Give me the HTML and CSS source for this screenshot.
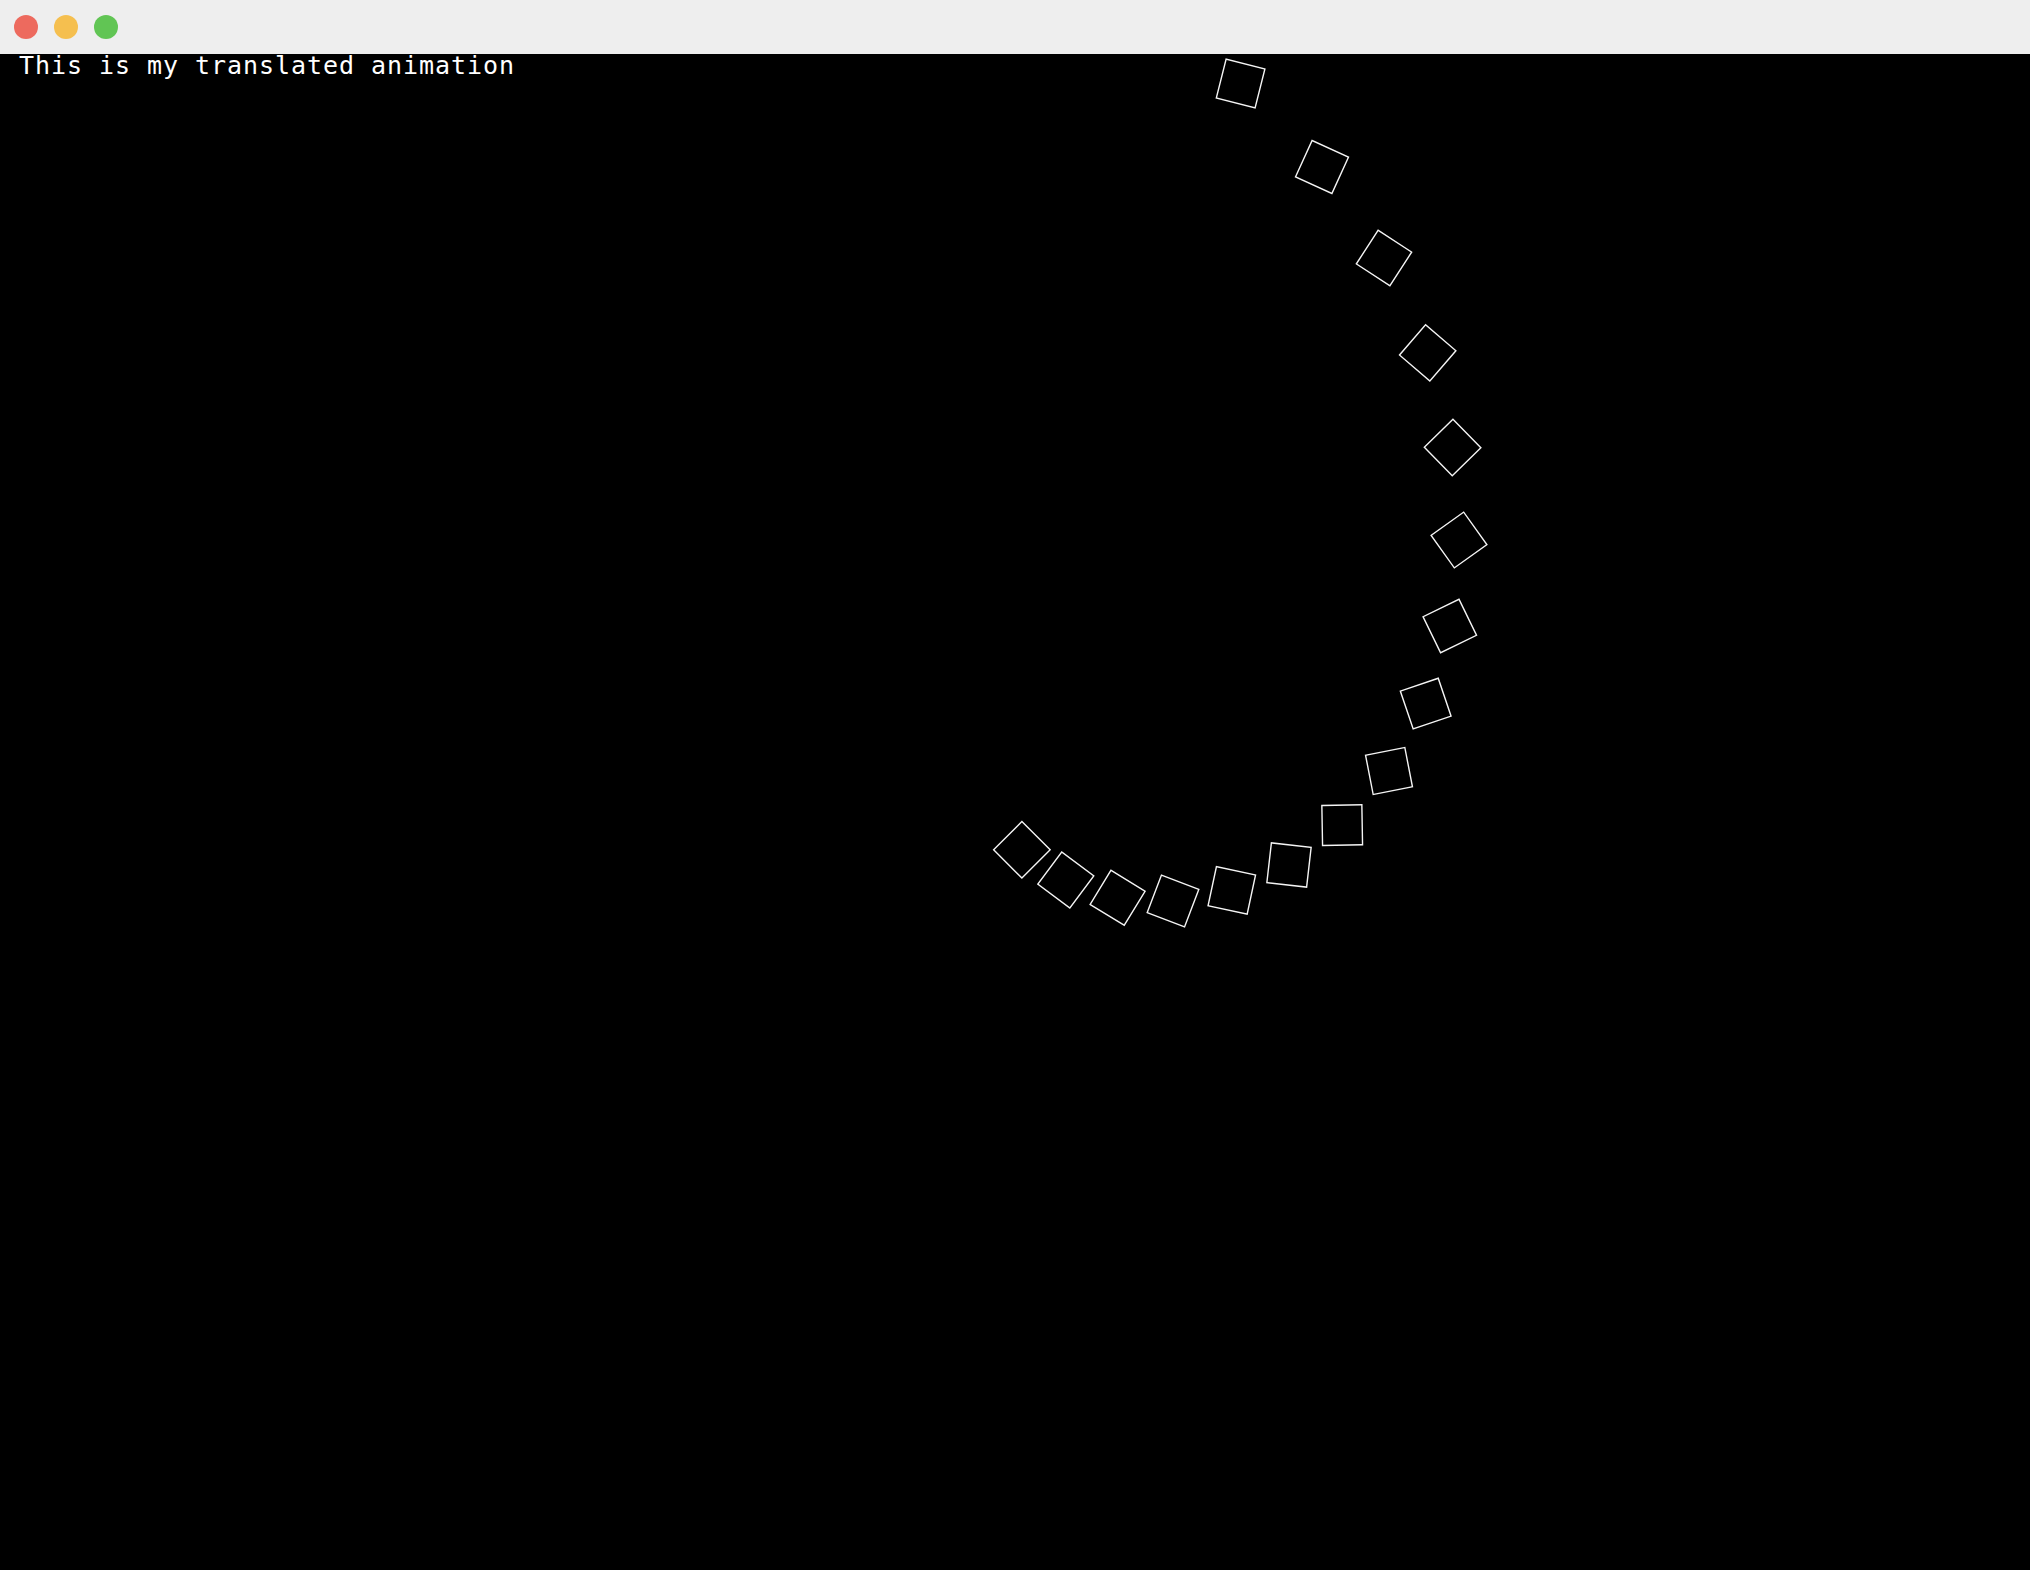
FILE: index.html
```html
<!DOCTYPE html>
<html>
<head>
<meta charset="utf-8">
<title>Animation</title>
<link rel="stylesheet" href="styles.css">
</head>
<body>
<div class="window">
  <div class="titlebar">
    <span class="light red"></span>
    <span class="light yellow"></span>
    <span class="light green"></span>
  </div>
  <div class="canvas">
    <div class="caption">This is my translated animation</div>
    <svg class="shapes" viewBox="0 54 2030 1516" width="2030" height="1516" xmlns="http://www.w3.org/2000/svg">
      <g fill="none" stroke="#f4f4f4" stroke-width="1.4">
        <rect x="-20" y="-20" width="40" height="40" transform="translate(1240.6 83.5) rotate(14.2)"/>
        <rect x="-20" y="-20" width="40" height="40" transform="translate(1322 167) rotate(24.5)"/>
        <rect x="-20" y="-20" width="40" height="40" transform="translate(1384 258) rotate(33)"/>
        <rect x="-20" y="-20" width="40" height="40" transform="translate(1427.7 352.9) rotate(40.7)"/>
        <rect x="-20" y="-20" width="40" height="40" transform="translate(1452.6 447.5) rotate(45.7)"/>
        <rect x="-20" y="-20" width="40" height="40" transform="translate(1459 540) rotate(54.5)"/>
        <rect x="-20" y="-20" width="40" height="40" transform="translate(1449.8 626) rotate(64)"/>
        <rect x="-20" y="-20" width="40" height="40" transform="translate(1425.7 703.6) rotate(71.3)"/>
        <rect x="-20" y="-20" width="40" height="40" transform="translate(1389 771) rotate(79)"/>
        <rect x="-20" y="-20" width="40" height="40" transform="translate(1342.2 825.1) rotate(89)"/>
        <rect x="-20" y="-20" width="40" height="40" transform="translate(1289 865) rotate(96.5)"/>
        <rect x="-20" y="-20" width="40" height="40" transform="translate(1231.8 890.4) rotate(102.1)"/>
        <rect x="-20" y="-20" width="40" height="40" transform="translate(1173 901) rotate(110.9)"/>
        <rect x="-20" y="-20" width="40" height="40" transform="translate(1117.6 897.8) rotate(121.4)"/>
        <rect x="-20" y="-20" width="40" height="40" transform="translate(1065.8 880) rotate(126.8)"/>
        <rect x="-20" y="-20" width="40" height="40" transform="translate(1021.9 849.8) rotate(135)"/>
      </g>
    </svg>
  </div>
</div>
</body>
</html>
```

FILE: styles.css
```css
html, body {
  margin: 0;
  padding: 0;
  background: #000;
}

.window {
  width: 2030px;
  height: 1570px;
  display: flex;
  flex-direction: column;
  overflow: hidden;
}

.titlebar {
  height: 54px;
  flex: 0 0 54px;
  background: #eeeeee;
  display: flex;
  align-items: center;
  gap: 16px;
  padding-left: 14px;
  box-sizing: border-box;
}

.light {
  width: 24px;
  height: 24px;
  border-radius: 50%;
  display: block;
}

.red { background: #ed6a5e; }
.yellow { background: #f5bf4f; }
.green { background: #61c554; }

.canvas {
  flex: 1;
  position: relative;
  background: #000;
}

.caption {
  font-family: "DejaVu Sans Mono", "Liberation Mono", monospace;
  font-size: 25px;
  letter-spacing: 0.95px;
  line-height: 24px;
  color: #fff;
  padding-left: 19px;
  white-space: pre;
}

.shapes {
  position: absolute;
  left: 0;
  top: 0;
}
```
